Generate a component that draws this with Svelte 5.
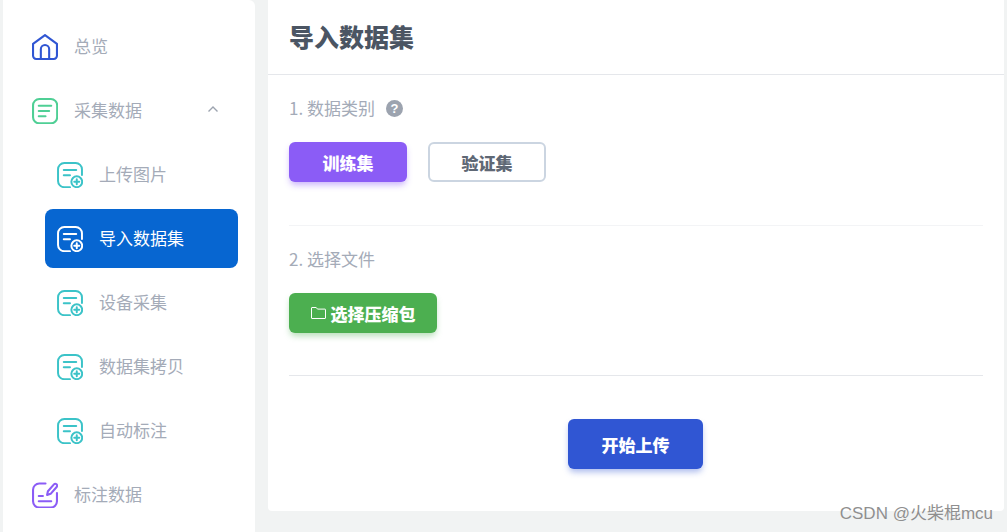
<script>
  const subItems = [
    { label: '上传图片' },
    { label: '导入数据集', active: true },
    { label: '设备采集' },
    { label: '数据集拷贝' },
    { label: '自动标注' }
  ]
</script>

<div class="page">
  <aside class="sidebar">
    <div class="row">
      <svg class="icon" viewBox="0 0 25 25" fill="none" stroke="#3056d3" stroke-width="2" stroke-linejoin="round">
        <path d="M1 9.5 12.5 1 24 9.5V21a3 3 0 0 1-3 3H4a3 3 0 0 1-3-3Z" />
        <path d="M8.5 24V14.5a4 4 0 0 1 8 0V24" />
      </svg>
      <span>总览</span>
    </div>
    <div class="row">
      <svg class="icon" viewBox="0 0 25 25" fill="none" stroke="#4fcf95" stroke-width="2" stroke-linecap="round">
        <rect x="1" y="1" width="23.2" height="23.4" rx="6" />
        <path d="M6.5 7.5h12M6.5 12.5h10M6.5 17.5h6.5" />
      </svg>
      <span>采集数据</span>
      <svg class="chevron" viewBox="0 0 12 8" fill="none" stroke="#9ca3af" stroke-width="1.4">
        <path d="M1.5 6.5 6 2l4.5 4.5" />
      </svg>
    </div>

    {#each subItems as item}
      <div class="row sub" class:active={item.active}>
        <svg class="icon" viewBox="0 0 25 25" fill="none" stroke="currentColor" stroke-width="1.9" stroke-linecap="round">
          <path d="M12.5 24.2H7a6 6 0 0 1-6-6V7a6 6 0 0 1 6-6h11a6 6 0 0 1 6 6v5.5" />
          <path d="M6.5 7.8h12M6.5 12.8h6" />
          <circle cx="19" cy="19" r="5.2" />
          <path d="M16.6 19h4.8M19 16.6v4.8" />
        </svg>
        <span>{item.label}</span>
      </div>
    {/each}

    <div class="row">
      <svg class="icon" viewBox="0 0 25 25" fill="none" stroke="#8b5cf6" stroke-width="2" stroke-linecap="round" stroke-linejoin="round">
        <path d="M13 1.5H7a6 6 0 0 0-6 6v11a6 6 0 0 0 6 6h11a6 6 0 0 0 6-6v-8" />
        <path d="M6.5 13.5h4M6.5 18.5h12" />
        <path d="M14.5 12.5l.8-3.6 5.8-6.6a1.7 1.7 0 0 1 2.5 0 1.7 1.7 0 0 1 .1 2.5l-5.8 6.6Z" />
      </svg>
      <span>标注数据</span>
    </div>
  </aside>

  <main class="card">
    <header>
      <h1>导入数据集</h1>
    </header>

    <section class="first">
      <div class="label">
        1. 数据类别
        <span class="help">?</span>
      </div>
      <div class="buttons">
        <button class="btn purple">训练集</button>
        <button class="btn outline">验证集</button>
      </div>
    </section>

    <section class="second">
      <div class="label">2. 选择文件</div>
      <button class="btn green">
        <svg class="folder" viewBox="0 0 15 12" fill="none" stroke="#fff" stroke-width="1">
          <path d="M.5 1a.5.5 0 0 1 .5-.5h4.2l1.3 1.6H14a.5.5 0 0 1 .5.5V11a.5.5 0 0 1-.5.5H1a.5.5 0 0 1-.5-.5Z" />
        </svg>
        选择压缩包
      </button>
    </section>

    <div class="submit">
      <button class="btn blue">开始上传</button>
    </div>
  </main>

  <div class="watermark">CSDN @火柴棍mcu</div>
</div>

<style>
  :global(body) {
    margin: 0;
    background: #f1f3f3;
  }
  .page {
    display: flex;
    height: 532px;
    overflow: hidden;
    padding-left: 3px;
    position: relative;
    box-sizing: border-box;
    font-family: "Noto Sans CJK SC", "Liberation Sans", sans-serif;
    font-size: 17px;
  }
  .sidebar {
    width: 252px;
    box-sizing: border-box;
    background: #fff;
    padding: 17px 17px 0;
    border-radius: 0 6px 0 0;
    display: flex;
    flex-direction: column;
    gap: 5px;
    flex-shrink: 0;
  }
  .row {
    height: 59px;
    flex-shrink: 0;
    display: flex;
    align-items: center;
    gap: 16px;
    padding-left: 12px;
    color: #a4abb8;
    border-radius: 8px;
  }
  .row span {
    padding-bottom: 2px;
  }
  .row.sub {
    margin-left: 25px;
  }
  .row.sub .icon {
    color: #3bc3c8;
  }
  .row.active {
    background: #0766d1;
    color: #fff;
  }
  .row.sub.active .icon {
    color: #fff;
  }
  .icon {
    width: 26px;
    height: 26px;
    flex-shrink: 0;
  }
  .chevron {
    width: 12px;
    height: 8px;
    margin-left: auto;
    margin-right: 19px;
    margin-top: -3px;
  }
  .card {
    width: 736px;
    height: 511px;
    margin-left: 13px;
    background: #fff;
    border-radius: 0 0 4px 4px;
    flex-shrink: 0;
    box-sizing: border-box;
  }
  header {
    height: 75px;
    box-sizing: border-box;
    border-bottom: 1px solid #e5e7eb;
    padding: 0 21px 2px;
    display: flex;
    align-items: center;
  }
  h1 {
    margin: 0;
    font-size: 25px;
    font-weight: 900;
    color: #4b5563;
    line-height: 1;
  }
  section {
    margin: 0 21px;
  }
  .first {
    height: 151px;
    box-sizing: border-box;
    padding-top: 21px;
    border-bottom: 1px solid #f3f4f6;
  }
  .second {
    height: 150px;
    box-sizing: border-box;
    padding-top: 21px;
    border-bottom: 1px solid #e5e7eb;
  }
  .label {
    height: 24px;
    line-height: 24px;
    color: #a4abb8;
    display: flex;
    align-items: center;
    gap: 11px;
    margin-bottom: 22px;
  }
  .help {
    width: 17px;
    height: 17px;
    border-radius: 50%;
    background: #9ca3af;
    color: #fff;
    font-size: 13px;
    font-weight: 700;
    line-height: 17px;
    text-align: center;
    font-family: "Liberation Sans", sans-serif;
  }
  .buttons {
    display: flex;
    gap: 21px;
  }
  .btn {
    height: 40px;
    border: none;
    border-radius: 6px;
    font-family: inherit;
    font-size: 17px;
    font-weight: 900;
    color: #fff;
    padding: 0;
    display: flex;
    align-items: center;
    justify-content: center;
    line-height: 1;
  }
  .purple {
    width: 118px;
    background: #8b5cf6;
    box-shadow: 0 4px 6px -1px rgba(139, 92, 246, 0.45);
  }
  .outline {
    width: 118px;
    background: #fff;
    border: 2px solid #cbd5e1;
    color: #5f6875;
  }
  .green {
    width: 148px;
    background: #4caf50;
    gap: 5px;
    box-shadow: 0 4px 6px -1px rgba(76, 175, 80, 0.4);
  }
  .folder {
    width: 15px;
    height: 12px;
  }
  .submit {
    display: flex;
    justify-content: center;
    padding: 43px 1px 0 0;
  }
  .blue {
    width: 135px;
    height: 50px;
    background: #3056d3;
    box-shadow: 0 4px 6px -1px rgba(48, 86, 211, 0.4);
  }
  .watermark {
    position: absolute;
    right: 14px;
    bottom: 6px;
    font-size: 17px;
    line-height: 24px;
    color: #8f8f8f;
    font-family: "Liberation Sans", "Noto Sans CJK SC", sans-serif;
    text-shadow: 0 0 1px rgba(255, 255, 255, 0.6);
  }
</style>
